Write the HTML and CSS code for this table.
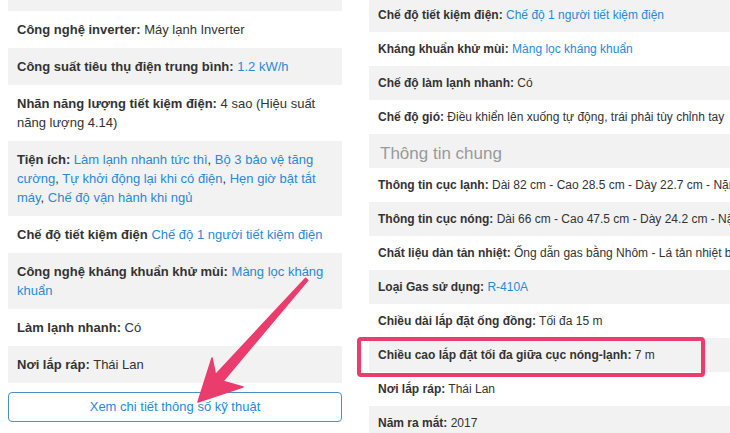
FILE: index.html
```html
<!DOCTYPE html>
<html>
<head>
  <meta charset="utf-8">
  <title>Thông số kỹ thuật</title>
  <link rel="stylesheet" href="styles.css">
</head>
<body>

<div class="page">
  <div class="left">
    <ul class="specs">
      <li class="cut">Công suất làm lạnh: 1 HP - 9.000 BTU</li>
      <li><b>Công nghệ inverter:</b> Máy lạnh Inverter</li>
      <li><b>Công suất tiêu thụ điện trung bình:</b> <a href="#">1.2 kW/h</a></li>
      <li><b>Nhãn năng lượng tiết kiệm điện:</b> 4 sao (Hiệu suất năng lượng 4.14)</li>
      <li><b>Tiện ích:</b> <a href="#">Làm lạnh nhanh tức thì</a>, <a href="#">Bộ 3 bảo vệ tăng cường</a>, <a href="#">Tự khởi động lại khi có điện</a>, <a href="#">Hẹn giờ bật tắt máy</a>, <a href="#">Chế độ vận hành khi ngủ</a></li>
      <li><b>Chế độ tiết kiệm điện</b> <a href="#">Chế độ 1 người tiết kiệm điện</a></li>
      <li><b>Công nghệ kháng khuẩn khử mùi:</b> <a href="#">Màng lọc kháng khuẩn</a></li>
      <li><b>Làm lạnh nhanh:</b> Có</li>
      <li><b>Nơi lắp ráp:</b> Thái Lan</li>
    </ul>
    <a href="#" class="more-btn">Xem chi tiết thông số kỹ thuật</a>
  </div>

  <div class="right">
    <ul class="specs-full">
      <li><b>Chế độ tiết kiệm điện:</b> <a href="#">Chế độ 1 người tiết kiệm điện</a></li>
      <li><b>Kháng khuẩn khử mùi:</b> <a href="#">Màng lọc kháng khuẩn</a></li>
      <li><b>Chế độ làm lạnh nhanh:</b> Có</li>
      <li><b>Chế độ gió:</b> Điều khiển lên xuống tự động, trái phải tùy chỉnh tay</li>
      <li class="group-title">Thông tin chung</li>
      <li><b>Thông tin cục lạnh:</b> Dài 82 cm - Cao 28.5 cm - Dày 22.7 cm - Nặng 9 kg</li>
      <li><b>Thông tin cục nóng:</b> Dài 66 cm - Cao 47.5 cm - Dày 24.2 cm - Nặng 25 kg</li>
      <li><b>Chất liệu dàn tản nhiệt:</b> Ống dẫn gas bằng Nhôm - Lá tản nhiệt bằng Nhôm</li>
      <li><b>Loại Gas sử dụng:</b> <a href="#">R-410A</a></li>
      <li><b>Chiều dài lắp đặt ống đồng:</b> Tối đa 15 m</li>
      <li><b>Chiều cao lắp đặt tối đa giữa cục nóng-lạnh:</b> 7 m</li>
      <li><b>Nơi lắp ráp:</b> Thái Lan</li>
      <li><b>Năm ra mắt:</b> 2017</li>
    </ul>
  </div>
</div>

<!-- annotations drawn over the screenshot -->
<div class="highlight"></div>
<svg class="arrow" width="730" height="433" viewBox="0 0 730 433">
  <polygon points="198,402 212,358 215.5,374.7 305.6,278.2 307.8,280.2 222.9,381.3 243,387"
           fill="#ea3d6d" stroke="#ea3d6d" stroke-width="1.5" stroke-linejoin="round"/>
</svg>

</body>
</html>
```

FILE: styles.css
```css
body {
  margin: 0;
  font-family: "Liberation Sans", Arial, Helvetica, sans-serif;
  color: #333;
  background: #fff;
  overflow: hidden;
}
a {
  color: #288ad6;
  text-decoration: none;
}
b {
  font-weight: bold;
}
.page {
  display: flex;
  gap: 27px;
  height: 433px;
  overflow: hidden;
}
.left {
  width: 334px;
  margin-left: 8px;
  flex-shrink: 0;
}
.specs, .specs-full {
  list-style: none;
  margin: 0;
  padding: 0;
}
.specs {
  margin-top: -26px;
  font-size: 13px;
  line-height: 19px;
}
.specs li {
  padding: 9px 9px 9px 9px;
}
.specs li:nth-child(odd) {
  background: #f2f2f2;
}
.more-btn {
  display: block;
  margin-top: 9px;
  height: 28px;
  line-height: 28px;
  border: 1px solid #4a90c4;
  border-radius: 4px;
  text-align: center;
  font-size: 13px;
}
.right {
  flex: 1;
  min-width: 0;
}
.specs-full {
  margin-top: -2px;
  font-size: 12px;
  line-height: 18px;
  white-space: nowrap;
}
.specs-full li {
  padding: 8px 9px;
}
.specs-full li:nth-child(odd) {
  background: #f2f2f2;
}
.specs-full .group-title {
  font-size: 17px;
  color: #999;
  padding: 11px 11px 5px;
}
.highlight {
  position: absolute;
  left: 357px;
  top: 337px;
  width: 340px;
  height: 32px;
  border: 4px solid #ea3d6d;
  border-radius: 4px;
}
.arrow {
  position: absolute;
  left: 0;
  top: 0;
}
```
